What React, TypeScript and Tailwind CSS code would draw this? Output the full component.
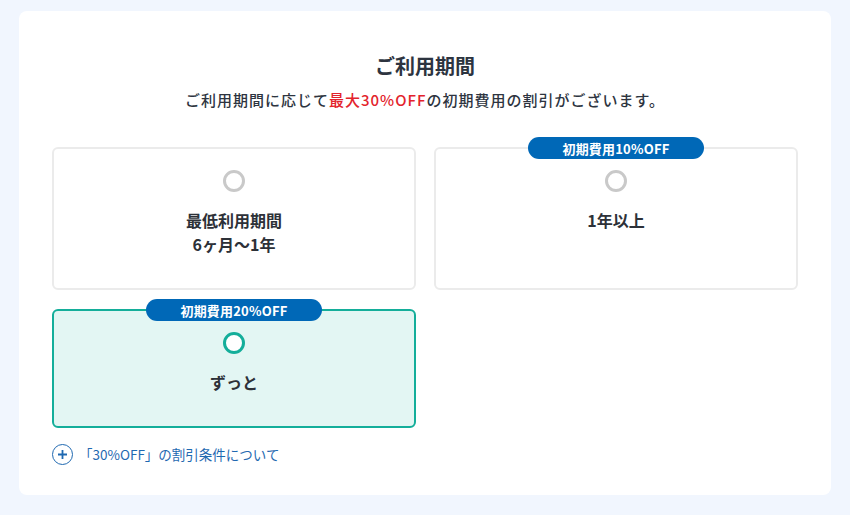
import { useState } from "react";

const font = { fontFamily: '"Noto Sans CJK JP", "Noto Sans", sans-serif' };

type Plan = { id: string; label: string[]; badge?: string };

const plans: Plan[] = [
  { id: "min", label: ["最低利用期間", "6ヶ月〜1年"] },
  { id: "1y", label: ["1年以上"], badge: "初期費用10%OFF" },
  { id: "forever", label: ["ずっと"], badge: "初期費用20%OFF" },
];

function PlanCard({ plan, selected, onSelect }: { plan: Plan; selected: boolean; onSelect: () => void }) {
  return (
    <button
      type="button"
      onClick={onSelect}
      className={`relative flex flex-col items-center rounded-[6px] border-2 pt-[21px] pb-[32px] ${
        selected ? "border-[#14ae9a] bg-[#e3f6f3]" : "border-[#ebebeb] bg-white"
      }`}
    >
      {plan.badge ? (
        <span className="absolute -top-[12px] left-1/2 flex h-[22px] w-[176px] -translate-x-1/2 items-center justify-center rounded-full bg-[#0068b7] text-[13px] font-bold leading-none tracking-[0.2px] text-white">
          {plan.badge}
        </span>
      ) : null}
      <span
        className={`block h-[22px] w-[22px] rounded-full border-[3px] ${
          selected ? "border-[#14ae9a] bg-white" : "border-[#c9c9c9] bg-white"
        }`}
      />
      <div className="mt-[16px] text-[16px] font-bold leading-[24px] text-[#2d3138]">
        {plan.label.map((l) => (
          <div key={l}>{l}</div>
        ))}
      </div>
    </button>
  );
}

export default function App() {
  const [selected, setSelected] = useState("forever");

  return (
    <div className="min-h-[515px] bg-[#f1f6fe] px-[19px] pt-[11px] pb-[20px]" style={font}>
      <div className="rounded-[8px] bg-white px-[33px] pt-[40px] pb-[30px]">
        <h1 className="text-center text-[20px] font-bold leading-[30px] text-[#2d3440]">ご利用期間</h1>
        <p className="mt-[7px] text-center text-[15px] font-medium leading-[24px] tracking-[1px] text-[#2d3440]">
          ご利用期間に応じて<span className="text-[#e3232c]">最大30%OFF</span>の初期費用の割引がございます。
        </p>

        <div className="mt-[35px] grid grid-cols-2 gap-x-[18px] gap-y-[19px]">
          {plans.map((p) => (
            <PlanCard key={p.id} plan={p} selected={selected === p.id} onSelect={() => setSelected(p.id)} />
          ))}
        </div>

        <button type="button" className="mt-[16px] flex items-center gap-[6px] text-[#1f69b1]">
          <span className="flex h-[21px] w-[21px] items-center justify-center rounded-full border-[1.5px] border-[#1f69b1]">
            <svg width="11" height="11" viewBox="0 0 11 11" fill="none" stroke="currentColor" strokeWidth="1.8">
              <path d="M5.5 1v9M1 5.5h9" />
            </svg>
          </span>
          <span className="text-[13.5px] leading-[21px]">「30%OFF」の割引条件について</span>
        </button>
      </div>
    </div>
  );
}
